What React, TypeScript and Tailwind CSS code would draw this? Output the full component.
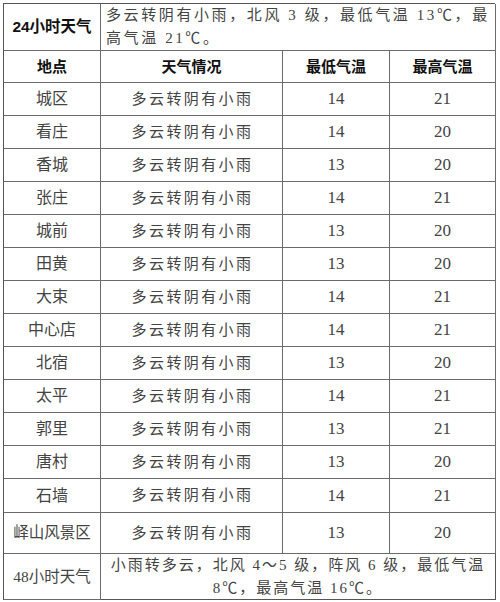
import React from "react";

const rows: [string, string, string][] = [
  ["城区", "14", "21"],
  ["看庄", "14", "20"],
  ["香城", "13", "20"],
  ["张庄", "14", "21"],
  ["城前", "13", "20"],
  ["田黄", "13", "20"],
  ["大束", "14", "21"],
  ["中心店", "14", "21"],
  ["北宿", "13", "20"],
  ["太平", "14", "21"],
  ["郭里", "13", "21"],
  ["唐村", "13", "20"],
  ["石墙", "14", "21"],
];

const cell = "border-r border-b border-[#6b6b6b] flex items-center justify-center";

export default function App() {
  return (
    <div className="w-[500px] h-[602px] bg-white pt-[3px] pl-[3px] font-['Liberation_Serif','Noto_Sans_CJK_SC',serif] text-[#444]">
      <div className="grid grid-cols-[97px_182px_107px_106px] grid-rows-[47px_32px_repeat(12,33px)_34px_41px_46px] border-t border-l border-[#555] w-[492px]">
        <div className={`${cell} font-bold text-[15.5px] text-[#111] font-['Liberation_Sans','Noto_Sans_CJK_SC',sans-serif]`}>
          24小时天气
        </div>
        <div className={`col-span-3 border-r border-b border-[#6b6b6b] flex flex-col justify-center pl-[5px] text-[15px] leading-[23px] tracking-[2.6px] whitespace-nowrap`}>
          <span>多云转阴有小雨，北风 3 级，最低气温 13℃，最</span>
          <span>高气温 21℃。</span>
        </div>
        {["地点", "天气情况", "最低气温", "最高气温"].map((h) => (
          <div key={h} className={`${cell} font-bold text-[15px] text-[#111] font-['Noto_Sans_CJK_SC',sans-serif]`}>
            {h}
          </div>
        ))}
        {rows.map(([name, lo, hi]) => (
          <React.Fragment key={name}>
            <div className={`${cell} text-[16px]`}>{name}</div>
            <div className={`${cell} text-[15px] tracking-[2.4px] pl-[2px]`}>多云转阴有小雨</div>
            <div className={`${cell} text-[17px]`}>{lo}</div>
            <div className={`${cell} text-[17px]`}>{hi}</div>
          </React.Fragment>
        ))}
        <div className={`${cell} text-[15.5px]`}>峄山风景区</div>
        <div className={`${cell} text-[15px] tracking-[2.4px] pl-[2px]`}>多云转阴有小雨</div>
        <div className={`${cell} text-[17px]`}>13</div>
        <div className={`${cell} text-[17px]`}>20</div>
        <div className={`${cell} text-[15.5px]`}>48小时天气</div>
        <div className={`col-span-3 border-r border-b border-[#555] flex flex-col justify-center items-center text-[15px] leading-[23px] tracking-[2px] whitespace-nowrap`}>
          <span>小雨转多云，北风 4～5 级，阵风 6 级，最低气温</span>
          <span>8℃，最高气温 16℃。</span>
        </div>
      </div>
    </div>
  );
}
